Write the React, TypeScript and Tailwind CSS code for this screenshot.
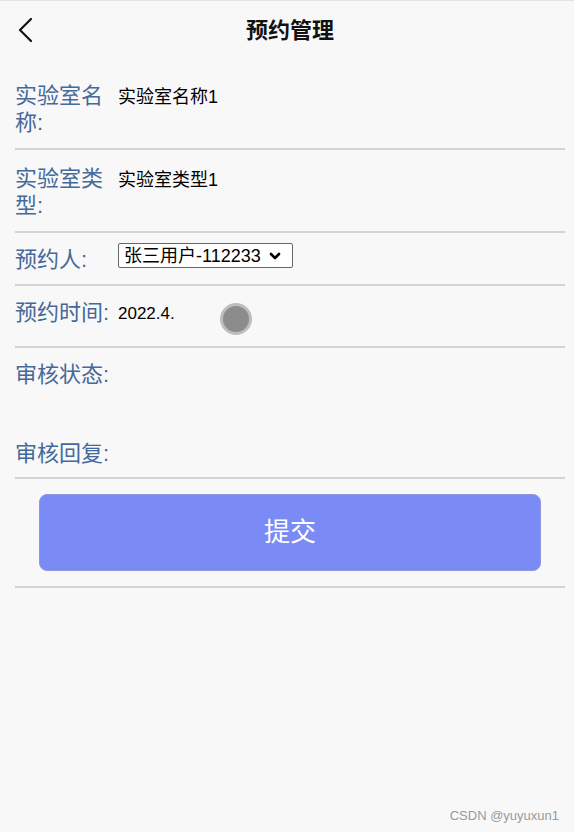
import React from "react";

const font = { fontFamily: '"Liberation Sans", "Noto Sans CJK SC", sans-serif' };

function Row({ label, children, className }: { label: string; children?: React.ReactNode; className: string }) {
  return (
    <div className={`relative flex items-start border-b-2 border-[#d4d4d4] ${className}`}>
      <div className="w-[100px] shrink-0 text-[22px] leading-[27px] text-[#44699a]">{label}</div>
      <div className="ml-[3px] min-h-[27px] flex items-start text-[18px] leading-[24px] text-black">{children}</div>
    </div>
  );
}

export default function App() {
  return (
    <div className="relative w-[574px] h-[832px] bg-[#f8f8f8] border-t border-[#e4e4e4] overflow-hidden" style={font}>
      {/* Header */}
      <div className="relative h-[61px] flex items-center justify-center">
        <button className="absolute left-[16px] top-[16px] p-0">
          <svg width="20" height="26" viewBox="0 0 20 26" fill="none" stroke="#111" strokeWidth="2.2" strokeLinecap="round" strokeLinejoin="round">
            <path d="M15 2L4 13l11 11" />
          </svg>
        </button>
        <h1 className="text-[22px] font-bold text-[#111] -mt-[2px] ml-[6px]">预约管理</h1>
      </div>

      <div className="ml-[15px] mr-[9px]">
        <Row label="实验室名称:" className="pt-[20px] pb-[12px]">
          <span className="mt-[3px]">实验室名称1</span>
        </Row>
        <Row label="实验室类型:" className="pt-[15px] pb-[12px]">
          <span className="mt-[3px]">实验室类型1</span>
        </Row>
        <Row label="预约人:" className="pt-[13px] pb-[11px]">
          <div className="-mt-[3px] h-[25px] w-[175px] flex items-center gap-[8px] bg-white border border-[#666] rounded-[2px] pl-[5px] text-[18px] text-black">
            <span className="whitespace-nowrap">张三用户-112233</span>
            <svg width="12" height="10" viewBox="0 0 12 10" fill="none" stroke="#000" strokeWidth="2.6" strokeLinecap="round" strokeLinejoin="round">
              <path d="M2 3l4 4 4-4" />
            </svg>
          </div>
        </Row>
        <Row label="预约时间:" className="pt-[13px] pb-[20px]">
          <span className="mt-[3px] text-[17px]">2022.4.</span>
          <span className="absolute left-[205px] top-[17px] w-[32px] h-[32px] rounded-full bg-[#8c8c8c] border-[3px] border-[#bdbdbd]" />
        </Row>
        <div className="border-b-2 border-[#d4d4d4] pt-[13px] pb-[10px]">
          <div className="text-[22px] leading-[27px] text-[#44699a]">审核状态:</div>
          <div className="text-[22px] leading-[27px] text-[#44699a] mt-[52px]">审核回复:</div>
        </div>
        <div className="px-[24px] pt-[15px] pb-[15px] border-b-2 border-[#d4d4d4]">
          <button className="w-full h-[77px] rounded-[8px] bg-[#7b8bf6] border border-[#8e99e0] text-white text-[26px]">
            提交
          </button>
        </div>
      </div>

      <div className="absolute right-[15px] bottom-[7px] text-[13px] text-[#9a9a9a]">CSDN @yuyuxun1</div>
    </div>
  );
}
